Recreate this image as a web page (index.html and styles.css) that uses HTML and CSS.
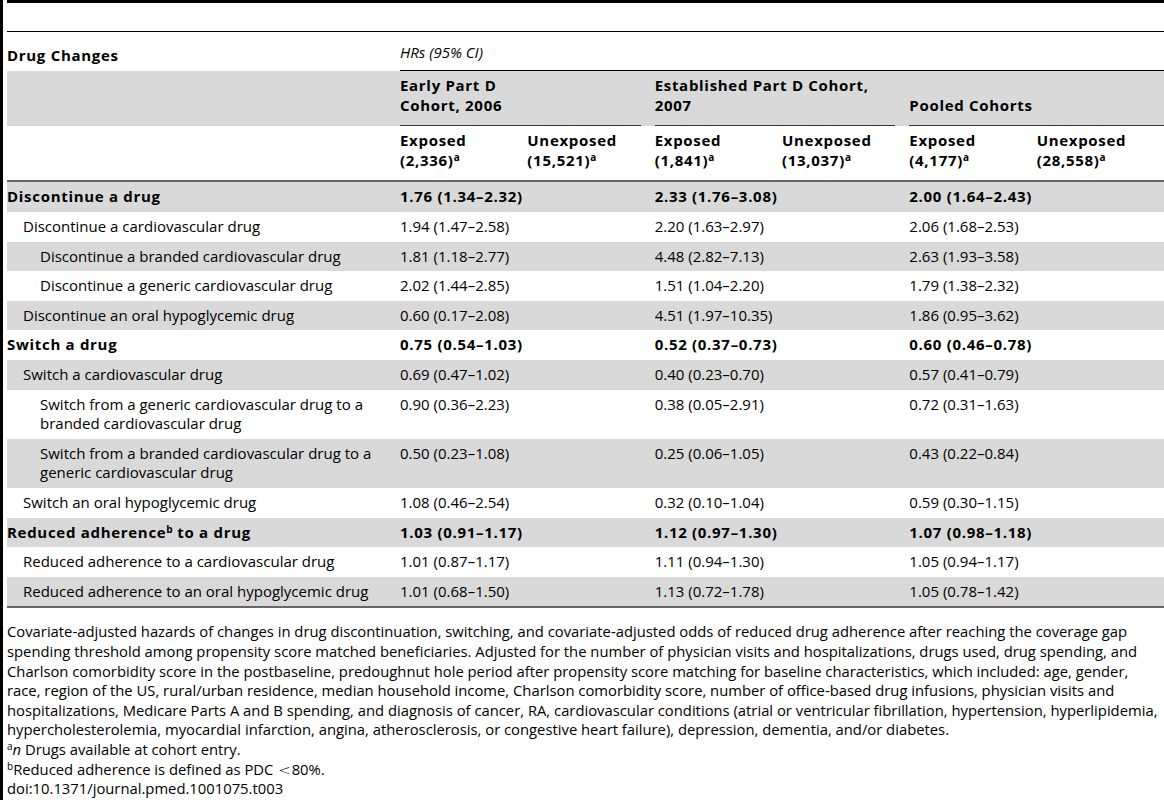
FILE: index.html
```html
<!DOCTYPE html>
<html lang="en">
<head>
  <meta charset="UTF-8" />
  <meta name="viewport" content="width=device-width, initial-scale=1.0" />
  <title>Table 3. Drug changes after reaching the coverage gap</title>
  <link rel="stylesheet" href="styles.css">
</head>
<body>
  <div class="top-rule"></div>

  <table class="results">
    <colgroup>
      <col class="col-label">
      <col span="6">
    </colgroup>
    <thead>
      <tr>
        <th class="label-head">Drug Changes</th>
        <th class="hr-head" colspan="6"><em>HRs (95% CI)</em></th>
      </tr>
      <tr class="shade">
        <th></th>
        <th class="group" colspan="2"><div class="ruled">Early Part D<br>Cohort, 2006</div></th>
        <th class="group" colspan="2"><div class="ruled">Established Part D Cohort,<br>2007</div></th>
        <th class="group" colspan="2"><div class="ruled">Pooled Cohorts</div></th>
      </tr>
      <tr class="sub">
        <th></th>
        <th>Exposed<br>(2,336)<sup>a</sup></th>
        <th>Unexposed<br>(15,521)<sup>a</sup></th>
        <th>Exposed<br>(1,841)<sup>a</sup></th>
        <th>Unexposed<br>(13,037)<sup>a</sup></th>
        <th>Exposed<br>(4,177)<sup>a</sup></th>
        <th>Unexposed<br>(28,558)<sup>a</sup></th>
      </tr>
    </thead>
    <tbody>
      <tr class="main">
        <td>Discontinue a drug</td>
        <td>1.76 (1.34–2.32)</td><td></td>
        <td>2.33 (1.76–3.08)</td><td></td>
        <td>2.00 (1.64–2.43)</td><td></td>
      </tr>
      <tr>
        <td class="lv1">Discontinue a cardiovascular drug</td>
        <td>1.94 (1.47–2.58)</td><td></td>
        <td>2.20 (1.63–2.97)</td><td></td>
        <td>2.06 (1.68–2.53)</td><td></td>
      </tr>
      <tr>
        <td class="lv2">Discontinue a branded cardiovascular drug</td>
        <td>1.81 (1.18–2.77)</td><td></td>
        <td>4.48 (2.82–7.13)</td><td></td>
        <td>2.63 (1.93–3.58)</td><td></td>
      </tr>
      <tr>
        <td class="lv2">Discontinue a generic cardiovascular drug</td>
        <td>2.02 (1.44–2.85)</td><td></td>
        <td>1.51 (1.04–2.20)</td><td></td>
        <td>1.79 (1.38–2.32)</td><td></td>
      </tr>
      <tr>
        <td class="lv1">Discontinue an oral hypoglycemic drug</td>
        <td>0.60 (0.17–2.08)</td><td></td>
        <td>4.51 (1.97–10.35)</td><td></td>
        <td>1.86 (0.95–3.62)</td><td></td>
      </tr>
      <tr class="main">
        <td>Switch a drug</td>
        <td>0.75 (0.54–1.03)</td><td></td>
        <td>0.52 (0.37–0.73)</td><td></td>
        <td>0.60 (0.46–0.78)</td><td></td>
      </tr>
      <tr>
        <td class="lv1">Switch a cardiovascular drug</td>
        <td>0.69 (0.47–1.02)</td><td></td>
        <td>0.40 (0.23–0.70)</td><td></td>
        <td>0.57 (0.41–0.79)</td><td></td>
      </tr>
      <tr>
        <td class="lv2">Switch from a generic cardiovascular drug to a<br>branded cardiovascular drug</td>
        <td>0.90 (0.36–2.23)</td><td></td>
        <td>0.38 (0.05–2.91)</td><td></td>
        <td>0.72 (0.31–1.63)</td><td></td>
      </tr>
      <tr>
        <td class="lv2">Switch from a branded cardiovascular drug to a<br>generic cardiovascular drug</td>
        <td>0.50 (0.23–1.08)</td><td></td>
        <td>0.25 (0.06–1.05)</td><td></td>
        <td>0.43 (0.22–0.84)</td><td></td>
      </tr>
      <tr>
        <td class="lv1">Switch an oral hypoglycemic drug</td>
        <td>1.08 (0.46–2.54)</td><td></td>
        <td>0.32 (0.10–1.04)</td><td></td>
        <td>0.59 (0.30–1.15)</td><td></td>
      </tr>
      <tr class="main">
        <td>Reduced adherence<sup>b</sup> to a drug</td>
        <td>1.03 (0.91–1.17)</td><td></td>
        <td>1.12 (0.97–1.30)</td><td></td>
        <td>1.07 (0.98–1.18)</td><td></td>
      </tr>
      <tr>
        <td class="lv1">Reduced adherence to a cardiovascular drug</td>
        <td>1.01 (0.87–1.17)</td><td></td>
        <td>1.11 (0.94–1.30)</td><td></td>
        <td>1.05 (0.94–1.17)</td><td></td>
      </tr>
      <tr>
        <td class="lv1">Reduced adherence to an oral hypoglycemic drug</td>
        <td>1.01 (0.68–1.50)</td><td></td>
        <td>1.13 (0.72–1.78)</td><td></td>
        <td>1.05 (0.78–1.42)</td><td></td>
      </tr>
    </tbody>
  </table>

  <div class="notes">
    <p>Covariate-adjusted hazards of changes in drug discontinuation, switching, and covariate-adjusted odds of reduced drug adherence after reaching the coverage gap<br>spending threshold among propensity score matched beneficiaries. Adjusted for the number of physician visits and hospitalizations, drugs used, drug spending, and<br>Charlson comorbidity score in the postbaseline, predoughnut hole period after propensity score matching for baseline characteristics, which included: age, gender,<br>race, region of the US, rural/urban residence, median household income, Charlson comorbidity score, number of office-based drug infusions, physician visits and<br>hospitalizations, Medicare Parts A and B spending, and diagnosis of cancer, RA, cardiovascular conditions (atrial or ventricular fibrillation, hypertension, hyperlipidemia,<br>hypercholesterolemia, myocardial infarction, angina, atherosclerosis, or congestive heart failure), depression, dementia, and/or diabetes.</p>
    <p><sup>a</sup><em>n</em> Drugs available at cohort entry.</p>
    <p><sup>b</sup>Reduced adherence is defined as PDC <span class="lt">&lt;</span>80%.</p>
    <p>doi:10.1371/journal.pmed.1001075.t003</p>
  </div>
</body>
</html>
```

FILE: styles.css
```css
html {
  background: #fff;
}

body {
  margin: 0;
  padding: 0 0 0 4px;
  min-height: 100vh;
  box-sizing: border-box;
  border-left: 3px solid #000;
  overflow-x: hidden;
  font-family: "Open Sans", "Noto Sans", sans-serif;
  font-size: 15px;
  line-height: 19.6px;
  color: #000;
}

.top-rule {
  height: 28px;
  border-top: 3px solid #000;
  border-bottom: 1px solid #000;
}

.results {
  width: 100%;
  border-collapse: collapse;
  table-layout: fixed;
}

.col-label {
  width: 393px;
}

.results th,
.results td {
  padding: 5px 14px 5px 0;
  text-align: left;
  vertical-align: top;
  white-space: nowrap;
}

.results th,
.main td {
  font-weight: bold;
  letter-spacing: 0.7px;
}

.results thead th {
  vertical-align: bottom;
}

.results .label-head {
  padding-top: 14px;
}

.results .hr-head {
  padding: 0 0 8px 0;
  border-bottom: 1px solid #000;
  font-weight: normal;
  letter-spacing: 0;
}

.shade th {
  background: #d9d9d9;
}

.results .group {
  padding-bottom: 0;
}

.results .group:last-child {
  padding-right: 0;
}

.ruled {
  padding-bottom: 10px;
  border-bottom: 1px solid #333;
}

.results .sub th {
  padding-bottom: 10px;
  border-bottom: 2px solid #666;
}

.results tbody tr:nth-child(odd) td {
  background: #d9d9d9;
}

.results tbody tr:last-child td {
  border-bottom: 2px solid #666;
}

.results .lv1 {
  padding-left: 16px;
}

.results .lv2 {
  padding-left: 33px;
}

sup {
  font-size: 10px;
  font-weight: bold;
  letter-spacing: 0;
  line-height: 0;
  vertical-align: 5px;
}

.notes {
  margin-top: 14px;
  font-size: 14.8px;
  white-space: nowrap;
}

.notes p {
  margin: 0;
}

.notes sup {
  font-weight: normal;
}

.lt {
  font-family: "DejaVu Sans", sans-serif;
  font-weight: 200;
  padding: 0 1px;
}
```
